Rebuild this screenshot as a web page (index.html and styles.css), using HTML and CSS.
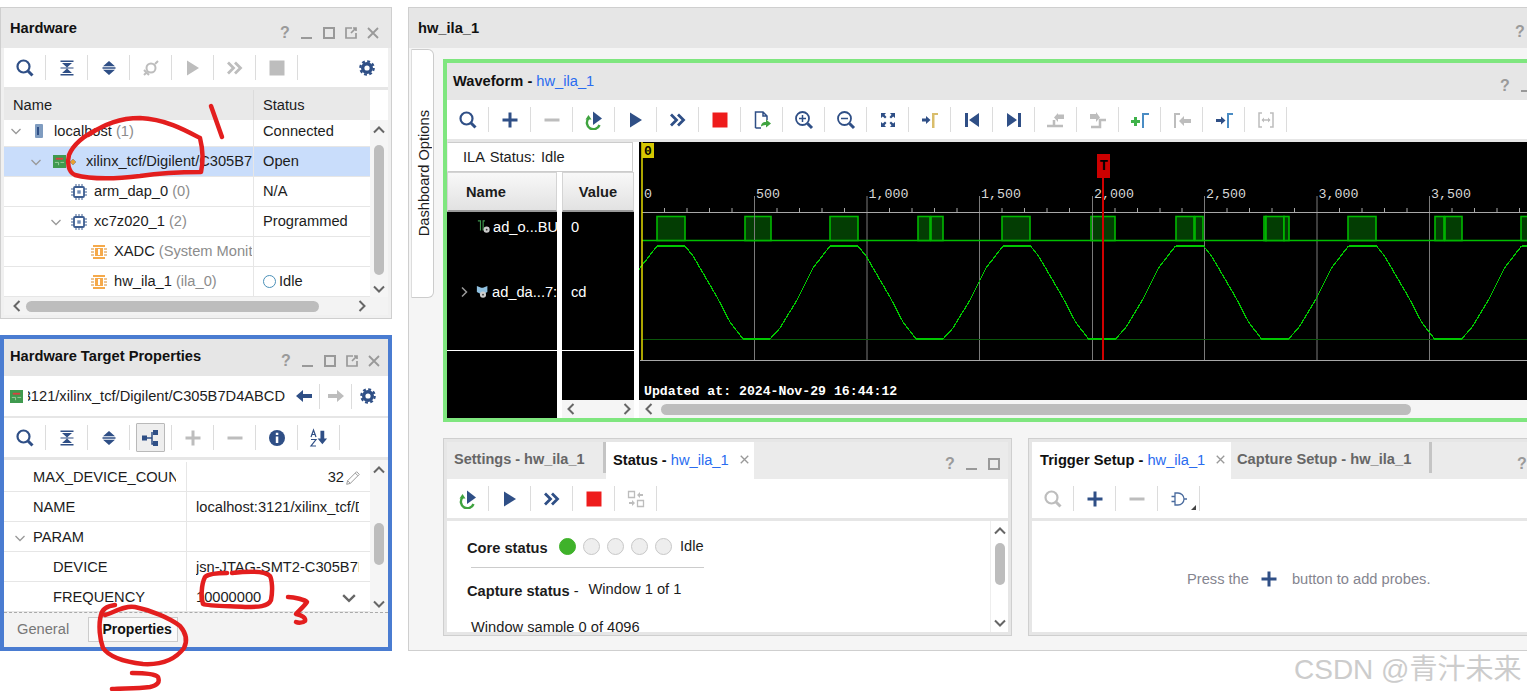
FILE: index.html
```html
<!DOCTYPE html>
<html lang="en">
<head>
<meta charset="utf-8">
<title>hw_ila_1</title>
<link rel="stylesheet" href="styles.css">
</head>
<body>
<svg class="sprite" width="0" height="0" aria-hidden="true">
  <symbol id="search" viewBox="0 0 20 20"><circle cx="8.500" cy="8.500" r="6" fill="none" stroke="currentColor" stroke-width="2.200"/><path d="M13 13l4.500 4.500" stroke="currentColor" stroke-width="3" fill="none"/></symbol>
  <symbol id="collapse" viewBox="0 0 20 20"><path fill="currentColor" d="M3.500 2.500h13V4h-13zM5 5h10l-5 4.500zM3.500 9.500h13v1h-13zM5 15l5-4.500 5 4.500zM3.500 16h13v1.500h-13z"/></symbol>
  <symbol id="expand" viewBox="0 0 20 20"><path fill="currentColor" d="M10 3l6 5.300H4zM3.500 9.300h13v1.400h-13zM4 11.700h12L10 17z"/></symbol>
  <symbol id="plug" viewBox="0 0 20 20"><g fill="none" stroke="currentColor" stroke-width="2"><circle cx="10" cy="10" r="4.500"/><path d="M6 14l-3 3M3 12l5 5M14 6l3-3"/></g></symbol>
  <symbol id="play" viewBox="0 0 20 20"><path fill="currentColor" d="M4 2.500L16 10 4 17.500z"/></symbol>
  <symbol id="fast" viewBox="0 0 20 20"><path fill="none" stroke="currentColor" stroke-width="2.800" d="M3 4.500l5.500 5.500L3 15.500M10 4.500l5.500 5.500L10 15.500"/></symbol>
  <symbol id="stop" viewBox="0 0 20 20"><path fill="currentColor" d="M2.500 2.500h15v15h-15z"/></symbol>
  <symbol id="gear" viewBox="0 0 20 20"><circle cx="10" cy="10" r="4.300" fill="none" stroke="currentColor" stroke-width="3.400"/><circle cx="10" cy="10" r="6.700" fill="none" stroke="currentColor" stroke-width="2.200" stroke-dasharray="2.900 2.360"/></symbol>
  <symbol id="plus" viewBox="0 0 20 20"><path fill="currentColor" d="M8.500 2.500h3v6h6v3h-6v6h-3v-6h-6v-3h6z"/></symbol>
  <symbol id="minus" viewBox="0 0 20 20"><path fill="currentColor" d="M2.500 8.500h15v3h-15z"/></symbol>
  <symbol id="rerun" viewBox="0 0 20 20"><path fill="none" stroke="#3fa33f" stroke-width="2.400" d="M4.500 8.500A6.500 6.500 0 1 0 15.500 15"/><path fill="#3fa33f" d="M1.500 9.500L4.500 5l3 4.500z"/><path fill="#2f4f86" d="M9 1.500L18 8.500 9 15z"/></symbol>
  <symbol id="export" viewBox="0 0 20 20"><path fill="none" stroke="#2f4f86" stroke-width="1.500" d="M3.500 18V2H11l4 4v4M3.500 18H9M11 2v4h4"/><path fill="#3fa33f" d="M9 16.500c0-3 2-4.500 5-4.500V9.500l5 4-5 4V15c-2 0-3.500.5-5 1.500z"/></symbol>
  <symbol id="zoomin" viewBox="0 0 20 20"><circle cx="8.500" cy="8.500" r="6.500" fill="none" stroke="currentColor" stroke-width="1.800"/><path d="M13.500 13.500l4.500 4.500" stroke="currentColor" stroke-width="3"/><path d="M8.500 5v7M5 8.500h7" stroke="currentColor" stroke-width="1.500"/></symbol>
  <symbol id="zoomout" viewBox="0 0 20 20"><circle cx="8.500" cy="8.500" r="6.500" fill="none" stroke="currentColor" stroke-width="1.800"/><path d="M13.500 13.500l4.500 4.500" stroke="currentColor" stroke-width="3"/><path d="M5 8.500h7" stroke="currentColor" stroke-width="1.500"/></symbol>
  <symbol id="fit" viewBox="0 0 20 20"><path fill="currentColor" d="M3 3h5L6.500 4.800 8.500 7 7 8.500 4.800 6.500 3 8zM17 3v5l-1.800-1.500L13 8.500 11.500 7l2-2.200L12 3zM3 17v-5l1.800 1.500L7 11.500 8.500 13l-2 2.200L8 17zM17 17h-5l1.500-1.800-2-2.200 1.500-1.500 2.200 2L17 12z"/></symbol>
  <symbol id="mark-zero" viewBox="0 0 20 20"><path fill="#2f4f86" d="M2 8.500h4V6l4.500 4L6 14v-2.500H2z"/><path fill="#d9bd6b" d="M12 18V3h6v2h-3.500v13z"/></symbol>
  <symbol id="first" viewBox="0 0 20 20"><path fill="currentColor" d="M3 3h3v14H3zM17 3v14L7 10z"/></symbol>
  <symbol id="last" viewBox="0 0 20 20"><path fill="currentColor" d="M14 3h3v14h-3zM3 3l10 7-10 7z"/></symbol>
  <symbol id="edge-l" viewBox="0 0 20 20"><path fill="none" stroke="currentColor" stroke-width="2.500" d="M1 16h7V10M6.500 16H17"/><path fill="currentColor" d="M18 4.500v4.500h-6v3L8 7.500 12 3v1.500z"/></symbol>
  <symbol id="edge-r" viewBox="0 0 20 20"><path fill="none" stroke="currentColor" stroke-width="2.500" d="M3 17h9V10h6"/><path fill="currentColor" d="M2 4v5h6v3l4-4.500L8 2v2z"/></symbol>
  <symbol id="mark-add" viewBox="0 0 20 20"><path fill="#3fb24a" d="M4 7h3v3h3v3H7v3H4v-3H1v-3h3z"/><path fill="#4a8cc4" d="M12 18V3h7v2h-5v13z"/></symbol>
  <symbol id="mark-back" viewBox="0 0 20 20"><path fill="currentColor" d="M2 18V3h6v2H4v13z"/><path fill="currentColor" d="M19 9v4h-7v3l-5-5 5-5v3z"/></symbol>
  <symbol id="mark-go" viewBox="0 0 20 20"><path fill="#2f4f86" d="M2 9h5V6.500l4.500 4-4.500 4V12H2z"/><path fill="#4a8cc4" d="M13 18V3h6v2h-4v13z"/></symbol>
  <symbol id="measure" viewBox="0 0 20 20"><path fill="none" stroke="currentColor" stroke-width="1.500" d="M6 3H3v14h3M14 3h3v14h-3M6 10h8"/><path fill="currentColor" d="M5.500 10L8 7.500v5zM14.500 10L12 7.500v5z"/></symbol>
  <symbol id="swap" viewBox="0 0 20 20"><g fill="none" stroke="currentColor" stroke-width="1.300"><path d="M2.500 2.500h6v6h-6zM11.500 11.500h6v6h-6z"/></g><path fill="currentColor" d="M17 5h-3V3l-3 3 3 3V7h3zM3 15h3v2l3-3-3-3v2H3z"/></symbol>
  <symbol id="gate" viewBox="0 0 20 20"><path fill="none" stroke="#4a6b9e" stroke-width="1.300" d="M6 4h3a6 6 0 0 1 0 12H6zM2.500 7.500H6M2.500 12.500H6M15 10h3"/></symbol>
  <symbol id="arrow-l" viewBox="0 0 20 20"><path fill="currentColor" d="M2 10l7-6v4h9v4H9v4z"/></symbol>
  <symbol id="arrow-r" viewBox="0 0 20 20"><path fill="currentColor" d="M18 10l-7-6v4H2v4h9v4z"/></symbol>
  <symbol id="tree" viewBox="0 0 20 20"><path fill="none" stroke="currentColor" stroke-width="1.500" d="M7 10h5M12 4v12h2"/><path fill="currentColor" d="M2 7.500h5v5H2zM13 2h5v5h-5zM13 13h5v5h-5z"/></symbol>
  <symbol id="info" viewBox="0 0 20 20"><circle cx="10" cy="10" r="8" fill="currentColor"/><path fill="#fff" d="M8.800 8.500h2.500V15H8.800zM8.800 4.800h2.500v2.300H8.800z"/></symbol>
  <symbol id="sort" viewBox="0 0 20 20"><path fill="none" stroke="currentColor" stroke-width="1.200" d="M2 9l2.500-7L7 9M3 6.500h3M2 11.500h5l-5 6.500h5"/><path fill="currentColor" d="M11 3h4v8h3l-5 6-5-6h3z" transform="translate(1 0) scale(.95)"/></symbol>
  <symbol id="pencil" viewBox="0 0 20 20"><path fill="none" stroke="#9a9a9a" stroke-width="1.100" d="M3 17l1-4L14 3l3 3L7 16zM4 13l3 3M12.500 4.500l3 3"/></symbol>
  <symbol id="chip" viewBox="0 0 16 16"><rect x="3" y="3" width="10" height="10" rx="1" fill="none" stroke="#3f5f92" stroke-width="1.800"/><rect x="6.300" y="6.300" width="3.400" height="3.400" fill="#6f8bb5"/><path stroke="#3f5f92" stroke-width="1" d="M5 0v3M8 0v3M11 0v3M5 13v3M8 13v3M11 13v3M0 5h3M0 8h3M0 11h3M13 5h3M13 8h3M13 11h3"/></symbol>
  <symbol id="core" viewBox="0 0 16 16"><path fill="#f5a94a" d="M2 1h12v2H2zM2 13h12v2H2zM4 4h8v8H4z"/><path fill="#fff" d="M7 5h2v6H7z"/><path stroke="#d98a2a" d="M0 5h3M0 8h3M0 11h3M13 5h3M13 8h3M13 11h3"/></symbol>
  <symbol id="server" viewBox="0 0 16 16"><rect x="4" y="1" width="8" height="14" rx="1" fill="#7f9cc0"/><path stroke="#2f4f86" d="M7 4v8" stroke-width="2"/></symbol>
  <symbol id="board" viewBox="0 0 14 14"><rect width="14" height="14" fill="#3f9a4f"/><path fill="#d84040" d="M3 3h8v2H3z"/><path stroke="#9ad09f" fill="none" d="M2 8h4v3M8 8h4"/></symbol>
  <symbol id="chev-d" viewBox="0 0 12 12"><path fill="none" stroke="currentColor" stroke-width="1.300" d="M1.500 4L6 8.500 10.500 4"/></symbol>
  <symbol id="chev-r" viewBox="0 0 12 12"><path fill="none" stroke="currentColor" stroke-width="1.500" d="M4 1.500L8.500 6 4 10.500"/></symbol>
  <symbol id="sb-u" viewBox="0 0 12 12"><path fill="none" stroke="#666" stroke-width="2" d="M1 8.500L6 3.500l5 5"/></symbol>
  <symbol id="sb-d" viewBox="0 0 12 12"><path fill="none" stroke="#666" stroke-width="2" d="M1 3.500l5 5 5-5"/></symbol>
  <symbol id="sb-l" viewBox="0 0 12 12"><path fill="none" stroke="#666" stroke-width="2" d="M8.500 1L3.500 6l5 5"/></symbol>
  <symbol id="sb-r" viewBox="0 0 12 12"><path fill="none" stroke="#666" stroke-width="2" d="M3.500 1l5 5-5 5"/></symbol>
  <symbol id="w-min" viewBox="0 0 12 12"><path fill="#999" d="M0 10h11v2H0z"/></symbol>
  <symbol id="w-max" viewBox="0 0 12 12"><path fill="none" stroke="#999" stroke-width="2" d="M1 1h10v10H1z"/></symbol>
  <symbol id="w-pop" viewBox="0 0 12 12"><path fill="none" stroke="#999" stroke-width="1.700" d="M7 1H1v10h10V6M6 6l5-5M8 1h3v3"/></symbol>
  <symbol id="w-close" viewBox="0 0 12 12"><path fill="none" stroke="#999" stroke-width="1.800" d="M1 1l10 10M11 1L1 11"/></symbol>
  <symbol id="sig-bit" viewBox="0 0 16 16"><path fill="none" stroke="#3f9a4f" stroke-width="1.300" d="M1 1h3v11M7 12V1h2"/><circle cx="11" cy="11" r="3.500" fill="#ccc"/><circle cx="11" cy="11" r="1" fill="#333"/></symbol>
  <symbol id="sig-bus" viewBox="0 0 16 16"><path fill="#8fc0e0" d="M1 1l5 2h2l5-2v7l-6 3-6-3z"/><circle cx="8" cy="11" r="3.500" fill="#ccc"/><circle cx="8" cy="11" r="1" fill="#333"/></symbol>
</svg>

<div class="page">
  <div class="left">
    <section class="hw-panel">
      <header class="panel-head hw-head">
        <span class="title">Hardware</span>
        <div class="ctrls">
          <span class="help">?</span>
          <span class="ctl"><svg class="w"><use href="#w-min"/></svg></span>
          <span class="ctl"><svg class="w"><use href="#w-max"/></svg></span>
          <span class="ctl"><svg class="w"><use href="#w-pop"/></svg></span>
          <span class="ctl"><svg class="w"><use href="#w-close"/></svg></span>
        </div>
      </header>
      <div class="toolbar">
        <span class="btn blue"><svg class="ic"><use href="#search"/></svg></span>
        <span class="btn blue"><svg class="ic"><use href="#collapse"/></svg></span>
        <span class="btn blue"><svg class="ic"><use href="#expand"/></svg></span>
        <span class="btn grey"><svg class="ic"><use href="#plug"/></svg></span>
        <span class="btn grey"><svg class="ic"><use href="#play"/></svg></span>
        <span class="btn grey"><svg class="ic"><use href="#fast"/></svg></span>
        <span class="btn grey"><svg class="ic"><use href="#stop"/></svg></span>
        <span class="tool-end blue"><svg class="ic"><use href="#gear"/></svg></span>
      </div>
      <div class="gap3"></div>
      <div class="tbl-head">
        <div class="th th-name">Name</div>
        <div class="th th-status">Status</div>
      </div>
      <div class="hw-body">
        <div class="hw-rows">
          <div class="row first">
            <div class="c1 lv0"><svg class="chev"><use href="#chev-d"/></svg><svg class="node"><use href="#server"/></svg><span>localhost <i>(1)</i></span></div>
            <div class="c2">Connected</div>
          </div>
          <div class="row sel">
            <div class="c1 lv1"><svg class="chev"><use href="#chev-d"/></svg><svg class="node wide" viewBox="0 0 26 14"><use href="#board" width="13" height="13"/><path fill="#e8a030" stroke="#777" stroke-width=".5" d="M20 4l3 3-3 3-3-3z"/></svg><span>xilinx_tcf/Digilent/C305B7D4ABCD</span></div>
            <div class="c2">Open</div>
          </div>
          <div class="row">
            <div class="c1 lv2"><span class="chev"></span><svg class="node"><use href="#chip"/></svg><span>arm_dap_0 <i>(0)</i></span></div>
            <div class="c2">N/A</div>
          </div>
          <div class="row">
            <div class="c1 lv2"><svg class="chev"><use href="#chev-d"/></svg><svg class="node"><use href="#chip"/></svg><span>xc7z020_1 <i>(2)</i></span></div>
            <div class="c2">Programmed</div>
          </div>
          <div class="row">
            <div class="c1 lv3"><span class="chev"></span><svg class="node"><use href="#core"/></svg><span>XADC <i>(System Monitor)</i></span></div>
            <div class="c2"></div>
          </div>
          <div class="row">
            <div class="c1 lv3"><span class="chev"></span><svg class="node"><use href="#core"/></svg><span>hw_ila_1 <i>(ila_0)</i></span></div>
            <div class="c2"><span class="idle-dot"></span>Idle</div>
          </div>
        </div>
        <div class="vscroll vs-hw">
          <svg class="sb"><use href="#sb-u"/></svg>
          <span class="thumb"></span>
          <svg class="sb sb-end"><use href="#sb-d"/></svg>
        </div>
      </div>
      <div class="hscroll hs-hw">
        <svg class="sb"><use href="#sb-l"/></svg>
        <span class="hthumb"></span>
        <svg class="sb"><use href="#sb-r"/></svg>
      </div>
    </section>

    <section class="prop-panel">
      <header class="panel-head prop-head">
        <span class="title">Hardware Target Properties</span>
        <div class="ctrls">
          <span class="help">?</span>
          <span class="ctl"><svg class="w"><use href="#w-min"/></svg></span>
          <span class="ctl"><svg class="w"><use href="#w-max"/></svg></span>
          <span class="ctl"><svg class="w"><use href="#w-pop"/></svg></span>
          <span class="ctl"><svg class="w"><use href="#w-close"/></svg></span>
        </div>
      </header>
      <div class="target">
        <svg class="t-board"><use href="#board"/></svg>
        <div class="t-path"><span>localhost:3121/xilinx_tcf/Digilent/C305B7D4ABCD</span></div>
        <span class="t-btn blue"><svg class="ic"><use href="#arrow-l"/></svg></span>
        <span class="t-btn grey"><svg class="ic"><use href="#arrow-r"/></svg></span>
        <span class="t-btn last blue"><svg class="ic"><use href="#gear"/></svg></span>
      </div>
      <div class="gap2"></div>
      <div class="toolbar">
        <span class="btn blue"><svg class="ic"><use href="#search"/></svg></span>
        <span class="btn blue"><svg class="ic"><use href="#collapse"/></svg></span>
        <span class="btn blue"><svg class="ic"><use href="#expand"/></svg></span>
        <span class="btn blue"><span class="active"><svg class="ic"><use href="#tree"/></svg></span></span>
        <span class="btn grey"><svg class="ic"><use href="#plus"/></svg></span>
        <span class="btn grey"><svg class="ic"><use href="#minus"/></svg></span>
        <span class="btn blue"><svg class="ic"><use href="#info"/></svg></span>
        <span class="btn blue"><svg class="ic"><use href="#sort"/></svg></span>
      </div>
      <div class="gap3"></div>
      <div class="prop-body">
        <div class="prop-rows">
          <div class="prow"><div class="p1 pl1"><span class="clip">MAX_DEVICE_COUNT</span></div><div class="p2 p2-num">32<svg class="pen"><use href="#pencil"/></svg></div></div>
          <div class="prow"><div class="p1 pl1"><span class="clip">NAME</span></div><div class="p2"><span class="clip">localhost:3121/xilinx_tcf/Digilent/C305B7D4ABCD</span></div></div>
          <div class="prow"><div class="p1 pl0"><svg class="chev"><use href="#chev-d"/></svg>PARAM</div><div class="p2"></div></div>
          <div class="prow"><div class="p1 pl2">DEVICE</div><div class="p2"><span class="clip">jsn-JTAG-SMT2-C305B7D4ABCD</span></div></div>
          <div class="prow"><div class="p1 pl2">FREQUENCY</div><div class="p2 p2-sel">10000000<svg class="sb sb-sel"><use href="#sb-d"/></svg></div></div>
        </div>
        <div class="vscroll vs-prop">
          <svg class="sb"><use href="#sb-u"/></svg>
          <span class="thumb"></span>
          <svg class="sb sb-end"><use href="#sb-d"/></svg>
        </div>
      </div>
      <div class="prop-tabs">
        <span class="ptab">General</span>
        <span class="ptab on">Properties</span>
      </div>
    </section>
  </div>

  <section class="main">
    <header class="panel-head main-head">
      <span class="title">hw_ila_1</span>
      <div class="ctrls">
        <span class="help">?</span>
        <span class="ctl"><svg class="w"><use href="#w-min"/></svg></span>
        <span class="ctl"><svg class="w"><use href="#w-max"/></svg></span>
        <span class="ctl"><svg class="w"><use href="#w-pop"/></svg></span>
        <span class="ctl"><svg class="w"><use href="#w-close"/></svg></span>
      </div>
    </header>
    <div class="main-body">
      <div class="dash-tab"><span>Dashboard Options</span></div>
      <div class="dash">
        <section class="wf">
          <header class="panel-head wf-head">
            <span class="title">Waveform - <a class="lnk">hw_ila_1</a></span>
            <div class="ctrls">
              <span class="help">?</span>
              <span class="ctl"><svg class="w"><use href="#w-min"/></svg></span>
              <span class="ctl"><svg class="w"><use href="#w-max"/></svg></span>
              <span class="ctl"><svg class="w"><use href="#w-pop"/></svg></span>
              <span class="ctl"><svg class="w"><use href="#w-close"/></svg></span>
            </div>
          </header>
          <div class="toolbar">
            <span class="btn blue"><svg class="ic"><use href="#search"/></svg></span>
            <span class="btn blue"><svg class="ic"><use href="#plus"/></svg></span>
            <span class="btn grey"><svg class="ic"><use href="#minus"/></svg></span>
            <span class="btn"><svg class="ic"><use href="#rerun"/></svg></span>
            <span class="btn blue"><svg class="ic"><use href="#play"/></svg></span>
            <span class="btn blue"><svg class="ic"><use href="#fast"/></svg></span>
            <span class="btn red"><svg class="ic"><use href="#stop"/></svg></span>
            <span class="btn"><svg class="ic"><use href="#export"/></svg></span>
            <span class="btn blue"><svg class="ic"><use href="#zoomin"/></svg></span>
            <span class="btn blue"><svg class="ic"><use href="#zoomout"/></svg></span>
            <span class="btn blue"><svg class="ic"><use href="#fit"/></svg></span>
            <span class="btn"><svg class="ic"><use href="#mark-zero"/></svg></span>
            <span class="btn blue"><svg class="ic"><use href="#first"/></svg></span>
            <span class="btn blue"><svg class="ic"><use href="#last"/></svg></span>
            <span class="btn grey"><svg class="ic"><use href="#edge-l"/></svg></span>
            <span class="btn grey"><svg class="ic"><use href="#edge-r"/></svg></span>
            <span class="btn"><svg class="ic"><use href="#mark-add"/></svg></span>
            <span class="btn grey"><svg class="ic"><use href="#mark-back"/></svg></span>
            <span class="btn"><svg class="ic"><use href="#mark-go"/></svg></span>
            <span class="btn grey"><svg class="ic"><use href="#measure"/></svg></span>
          </div>
          <div class="gap3"></div>
          <div class="wf-area">
            <div class="wf-side">
              <div class="ila">ILA Status: Idle</div>
              <div class="wf-cols">
                <div class="wf-col col-name">
                  <div class="wf-h wf-h-name">Name</div>
                  <div class="sig-rows">
                    <div class="sig s1"><svg class="sig-ic"><use href="#sig-bit"/></svg><span>ad_o...BU</span></div>
                    <div class="sig s2"><svg class="sig-chev"><use href="#chev-r"/></svg><svg class="sig-ic"><use href="#sig-bus"/></svg><span>ad_da...7:</span></div>
                  </div>
                  <div class="sig-fill"></div>
                </div>
                <div class="wf-col col-val">
                  <div class="wf-h">Value</div>
                  <div class="sig-rows">
                    <div class="val s1">0</div>
                    <div class="val s2">cd</div>
                  </div>
                  <div class="sig-fill short"></div>
                  <div class="hscroll hs-val">
                    <svg class="sb"><use href="#sb-l"/></svg>
                    <svg class="sb"><use href="#sb-r"/></svg>
                  </div>
                </div>
              </div>
            </div>
            <div class="wf-plot">
              <svg class="plot" viewBox="639 142 888 258" width="888" height="258">
                <defs>
                  <path id="period" fill="none" stroke="#00c800" stroke-width="1.200" d="M657 246H685L693 256 703 273 717 297 730 322 743 339H770L780 328 797 300 813 268 830 246"/>
                </defs>
                <g class="grid">
                  <path d="M754.500 196V360M867 196V360M979.500 196V360M1092.500 196V360M1204.500 196V360M1317 196V360M1429.500 196V360"/>
                </g>
                <path d="M642 212.500H1527" class="ruler"/>
                <path class="ruler" d="M664.500 208v4M687 208v4M709.500 208v4M732 208v4M777 208v4M799.500 208v4M822 208v4M844.500 208v4M889.500 208v4M912 208v4M934.500 208v4M957 208v4M1002 208v4M1024.500 208v4M1047 208v4M1069.500 208v4M1115 208v4M1137.500 208v4M1160 208v4M1182 208v4M1227 208v4M1249.500 208v4M1272 208v4M1294.500 208v4M1339.500 208v4M1362 208v4M1384.500 208v4M1407 208v4M1452 208v4M1474.500 208v4M1497 208v4M1519.500 208v4"/>
                <g class="tick-labels">
                  <text x="644" y="198">0</text>
                  <text x="756" y="198">500</text>
                  <text x="868.500" y="198">1,000</text>
                  <text x="981" y="198">1,500</text>
                  <text x="1094" y="198">2,000</text>
                  <text x="1206" y="198">2,500</text>
                  <text x="1318.500" y="198">3,000</text>
                  <text x="1431" y="198">3,500</text>
                </g>
                <path d="M642 240.500H1527" class="lo"/>
                <g class="pulses">
                  <rect x="657" y="216.500" width="28" height="24"/>
                  <rect x="745" y="216.500" width="26" height="24"/>
                  <rect x="830" y="216.500" width="28" height="24"/>
                  <rect x="918" y="216.500" width="12" height="24"/>
                  <rect x="931" y="216.500" width="12" height="24"/>
                  <rect x="1002" y="216.500" width="28" height="24"/>
                  <rect x="1091" y="216.500" width="24" height="24"/>
                  <rect x="1176" y="216.500" width="18" height="24"/>
                  <rect x="1195" y="216.500" width="8" height="24"/>
                  <rect x="1264" y="216.500" width="2" height="24"/>
                  <rect x="1266" y="216.500" width="18" height="24"/>
                  <rect x="1284" y="216.500" width="5" height="24"/>
                  <rect x="1348" y="216.500" width="28" height="24"/>
                  <rect x="1435" y="216.500" width="9" height="24"/>
                  <rect x="1445" y="216.500" width="17" height="24"/>
                  <rect x="1521" y="216.500" width="28" height="24"/>
                </g>
                <g class="grid over">
                  <path d="M754.500 216V240M1092.500 216V240M1204.500 216V240"/>
                </g>
                <path d="M642 339.500H1527" class="base"/>
                <g shape-rendering="crispEdges">
                  <use href="#period" x="-173"/>
                  <use href="#period"/>
                  <use href="#period" x="173"/>
                  <use href="#period" x="345.500"/>
                  <use href="#period" x="518.500"/>
                  <use href="#period" x="691.500"/>
                  <use href="#period" x="864.500"/>
                </g>
                <path d="M640 360.500H1527" class="ruler"/>
                <path d="M642 142V360" class="cursor"/>
                <rect x="642" y="143" width="12" height="15" fill="#d6c800"/>
                <text x="644" y="155" class="zero">0</text>
                <path d="M1103 178V360" class="trig"/>
                <rect x="1097" y="154" width="13" height="24" fill="#cc0000"/>
                <text x="1099.500" y="170" class="t-label">T</text>
                <text x="644" y="395" class="updated">Updated at: 2024-Nov-29 16:44:12</text>
              </svg>
              <div class="hscroll hs-plot">
                <svg class="sb"><use href="#sb-l"/></svg>
                <span class="hthumb"></span>
              </div>
            </div>
          </div>
        </section>

        <div class="lower">
          <section class="sub status">
            <div class="tabs">
              <span class="tab off">Settings - hw_ila_1</span>
              <span class="tab-sep"></span>
              <span class="tab on">Status - <a class="lnk">hw_ila_1</a><svg class="tab-x"><use href="#w-close"/></svg></span>
              <div class="ctrls">
                <span class="help">?</span>
                <span class="ctl"><svg class="w"><use href="#w-min"/></svg></span>
                <span class="ctl"><svg class="w"><use href="#w-max"/></svg></span>
              </div>
            </div>
            <div class="toolbar">
              <span class="btn"><svg class="ic"><use href="#rerun"/></svg></span>
              <span class="btn blue"><svg class="ic"><use href="#play"/></svg></span>
              <span class="btn blue"><svg class="ic"><use href="#fast"/></svg></span>
              <span class="btn red"><svg class="ic"><use href="#stop"/></svg></span>
              <span class="btn grey"><svg class="ic"><use href="#swap"/></svg></span>
            </div>
            <div class="gap3"></div>
            <div class="sub-body">
              <div class="status-text">
                <div class="core">
                  <b>Core status</b>
                  <span class="led on"></span><span class="led"></span><span class="led"></span><span class="led"></span><span class="led"></span>
                  <span class="led-label">Idle</span>
                </div>
                <hr class="rule">
                <div class="capture"><b>Capture status</b><span class="dash-sign">-</span><span class="cap-val">Window 1 of 1</span></div>
                <div class="sample">Window sample 0 of 4096</div>
              </div>
              <div class="vscroll vs-status">
                <svg class="sb"><use href="#sb-u"/></svg>
                <span class="thumb"></span>
                <svg class="sb sb-end"><use href="#sb-d"/></svg>
              </div>
            </div>
          </section>

          <section class="sub trigger">
            <div class="tabs">
              <span class="tab on tr-on">Trigger Setup - <a class="lnk">hw_ila_1</a><svg class="tab-x"><use href="#w-close"/></svg></span>
              <span class="tab off cap">Capture Setup - hw_ila_1</span>
              <span class="tab-sep"></span>
              <div class="ctrls">
                <span class="help">?</span>
                <span class="ctl"><svg class="w"><use href="#w-min"/></svg></span>
                <span class="ctl"><svg class="w"><use href="#w-max"/></svg></span>
              </div>
            </div>
            <div class="toolbar">
              <span class="btn grey"><svg class="ic"><use href="#search"/></svg></span>
              <span class="btn blue"><svg class="ic"><use href="#plus"/></svg></span>
              <span class="btn grey"><svg class="ic"><use href="#minus"/></svg></span>
              <span class="btn gate-btn"><svg class="ic"><use href="#gate"/></svg><span class="corner"></span></span>
            </div>
            <div class="gap3"></div>
            <div class="sub-body hint">
              <span>Press the</span>
              <svg class="ic blue hint-plus"><use href="#plus"/></svg>
              <span>button to add probes.</span>
            </div>
          </section>
        </div>
      </div>
    </div>
  </section>

  <svg class="ink" viewBox="0 0 1527 691" width="1527" height="691" aria-hidden="true">
    <g fill="none" stroke="#e31e1e" stroke-width="4.500" stroke-linecap="round" stroke-linejoin="round">
      <path d="M88 135C105 124 120 118 140 118C165 119 185 130 200 138C203 150 203 163 201 172C180 172 160 173 140 176C115 179 90 179 75 175C68 172 67 162 69 155C73 145 85 135 100 128"/>
      <path d="M211 106L222 137"/>
      <path d="M115 605C108 606 102 609 101 615C98 625 100 640 103 648C110 658 125 662 143 664C160 665 175 660 184 648C188 640 186 633 180 626C170 618 150 610 135 607C125 605 115 612 105 615"/>
      <path d="M132 673C143 673 155 674 158 677C160 682 158 685 150 687C135 689 122 688 112 689"/>
      <path d="M227 573C218 573 208 574 205 577C201 585 201 598 203 604C208 606 225 606 245 607C258 607 268 607 271 600C273 590 272 580 270 576C265 571 250 571 232 573"/>
      <path d="M288 597C295 597 305 600 307 602C303 608 297 612 296 614C302 615 306 618 305 621C303 623 298 623 296 622"/>
    </g>
  </svg>
  <div class="watermark">CSDN @青汁未来</div>
</div>
</body>
</html>
```

FILE: styles.css
```css
* { box-sizing: border-box; }
html, body { margin: 0; padding: 0; height: 100%; overflow: hidden; background: #fff; }
body { font: 14.67px "Liberation Sans", Arial, sans-serif; color: #1c1c1c; }
.sprite { display: block; width: 0; height: 0; }

.page { position: relative; display: flex; gap: 16px; width: 1527px; height: 691px; overflow: hidden; }
.left { flex: 0 0 392px; padding-top: 7px; display: flex; flex-direction: column; gap: 16px; }

.panel-head { display: flex; justify-content: space-between; background: #e6e6e6; flex: none; }
.title { font-weight: 700; color: #111; white-space: nowrap; }
.ctrls { display: flex; align-items: center; flex: none; }
.help { width: 22px; text-align: center; font: 700 16px "Liberation Sans", sans-serif; color: #9a9a9a; }
.ctl { width: 22px; display: flex; justify-content: center; }
.w { width: 12px; height: 12px; display: block; }

.toolbar { display: flex; height: 39px; background: #fff; padding-top: 7px; flex: none; position: relative; }
.btn { flex: none; width: 42px; height: 25px; border-right: 1px solid #dcdcdc; display: flex; align-items: center; justify-content: center; position: relative; }
.ic { width: 20px; height: 20px; display: block; }
.blue { color: #2f4f86; }
.grey { color: #bdbdbd; }
.red { color: #ee1c1c; }
.tool-end { margin-left: auto; width: 42px; height: 25px; display: flex; align-items: center; justify-content: center; }
.active { width: 29px; height: 29px; background: #eee; border: 1px solid #b9b9b9; display: flex; align-items: center; justify-content: center; border-radius: 1px; margin-left: -1px; }
.gap3 { height: 3px; flex: none; background: #e6e6e6; }
.gap2 { height: 2px; flex: none; background: #e6e6e6; }

.hw-panel { height: 312px; border: 1px solid #cfcfcf; background: #f0f0f0; padding: 0 3px 4px; display: flex; flex-direction: column; }
.hw-head { height: 40px; margin: 0 -3px; padding: 12px 7px 0 9px; background: #e8e8e8; }
.hw-head .ctrls { margin-top: 3px; height: 20px; }

.tbl-head { display: flex; height: 30px; background: #fff; flex: none; }
.th { background: #e9e9e9; padding-top: 7px; height: 30px; }
.th-name { width: 250px; padding-left: 9px; border-right: 1px solid #dcdcdc; }
.th-status { width: 116px; padding-left: 9px; }

.hw-body { display: flex; height: 177px; background: #fff; flex: none; }
.hw-rows { width: 366px; flex: none; }
.row { display: flex; height: 30px; border-bottom: 1px solid #e6e6e6; line-height: 29px; }
.row.first { height: 27px; line-height: 22px; }
.row.first .c1 { padding-bottom: 4px; }
.row.sel { background: #c9ddfb; }
.c1 { width: 250px; display: flex; align-items: center; white-space: nowrap; overflow: hidden; border-right: 1px solid #e6e6e6; flex: none; padding-right: 1px; }
.c1 > span:last-child { overflow: hidden; min-width: 0; }
.c2 { flex: 1; padding-left: 9px; white-space: nowrap; }
.c1 i { font-style: normal; color: #8c8c8c; }
.lv0 { padding-left: 5px; }
.lv1 { padding-left: 25px; }
.lv2 { padding-left: 45px; }
.lv3 { padding-left: 65px; }
.chev { width: 14px; height: 12px; color: #999; flex: none; display: block; }
.node { width: 16px; height: 16px; margin: 0 7px 0 8px; flex: none; display: block; }
.node.wide { width: 26px; height: 14px; margin-left: 10px; }
.idle-dot { display: inline-block; width: 13px; height: 13px; border: 1px solid #4a90b8; border-radius: 50%; margin-right: 3px; vertical-align: -2px; }

.sb { width: 12px; height: 12px; display: block; flex: none; }
.vscroll { width: 18px; flex: none; display: flex; flex-direction: column; align-items: center; background: #f5f5f5; padding-top: 4px; padding-bottom: 2px; }
.thumb { display: block; width: 10px; background: #bdbdbd; border-radius: 5px; flex: none; }
.sb-end { margin-top: auto; }
.vs-hw .thumb { margin-top: 9px; height: 130px; }
.vs-prop .thumb { margin-top: 47px; height: 42px; }
.vs-status .thumb { margin-top: 6px; height: 42px; }
.vs-status { padding-bottom: 3px; background: #fff; border-left: 1px solid #eee; }

.hscroll { display: flex; align-items: center; background: #f3f3f3; flex: none; }
.hthumb { display: block; height: 11px; background: #bdbdbd; border-radius: 6px; flex: none; }
.hs-hw { height: 18px; padding-left: 3px; width: 384px; padding-right: 20px; }
.hs-hw .sb:first-child { margin-left: 4px; }
.hs-hw .sb:last-child { margin-left: auto; }
.hs-hw .hthumb { width: 293px; margin-left: 3px; }

.prop-panel { height: 316px; border: 4px solid #4a7cd1; background: #f3f3f3; display: flex; flex-direction: column; }
.prop-head { height: 37px; padding: 9px 3px 0 6px; }
.prop-head .ctrls { margin-top: 3px; height: 20px; }
.target { display: flex; align-items: center; height: 40px; background: #fff; flex: none; }
.t-board { width: 13px; height: 13px; margin-left: 6px; flex: none; }
.t-path { width: 257px; margin-left: 5px; overflow: hidden; display: flex; justify-content: flex-end; white-space: nowrap; flex: none; }
.t-btn { width: 32px; height: 25px; display: flex; align-items: center; justify-content: center; border-right: 1px solid #dcdcdc; flex: none; }
.t-btn.blue { margin-left: 3px; }
.t-btn.last { border-right: 0; margin-left: 0; width: 32px; }
.prop-body { display: flex; height: 152px; background: #fff; flex: none; padding-top: 2px; }
.prop-rows { width: 366px; flex: none; }
.vs-prop { margin-top: -2px; padding-top: 4px; }
.prow { display: flex; height: 30px; border-bottom: 1px solid #e6e6e6; line-height: 31px; white-space: nowrap; }
.p1 { width: 183px; flex: none; overflow: hidden; border-right: 1px solid #e6e6e6; display: flex; align-items: center; padding-top: 2px; }
.clip { display: block; overflow: hidden; white-space: nowrap; }
.pl0 { padding-left: 9px; }
.pl0 .chev { margin-right: 6px; }
.pl1 { padding-left: 29px; padding-right: 10px; }
.pl2 { padding-left: 49px; }
.p2 { flex: 1; padding: 0 11px 0 9px; overflow: hidden; min-width: 0; }
.p2-num { display: flex; justify-content: flex-end; align-items: center; padding-top: 2px; padding-right: 8px; }
.pen { width: 18px; height: 18px; flex: none; }
.p2-sel { display: flex; justify-content: space-between; align-items: center; padding-top: 2px; padding-right: 14px; }
.sb-sel { width: 14px; height: 14px; }
.prop-tabs { flex: 1; border-top: 1px dashed #aaa; background: #f3f3f3; display: flex; align-items: center; padding: 0 0 2px 13px; gap: 18px; }
.ptab { color: #777; }
.ptab.on { width: 90px; height: 25px; border: 1px solid #ccc; background: #fafafa; color: #111; font-size: 14px; font-weight: 700; display: flex; align-items: center; justify-content: center; padding-left: 8px; margin-left: 1px; }

.main { flex: 0 0 1218px; height: 644px; margin-top: 7px; border: 1px solid #cfcfcf; background: #f5f5f5; display: flex; flex-direction: column; }
.main-head { height: 40px; padding: 12px 6px 0 9px; background: #e6e6e6; }
.main-head .ctrls { margin-top: 2px; height: 20px; }
.main-body { display: flex; flex: 1; background: #f5f5f5; min-height: 0; }
.dash-tab { flex: none; width: 23px; height: 249px; margin: 1px 0 0 2px; padding-left: 2px; background: #fff; border: 1px solid #ccc; border-left-color: #ddd; border-radius: 0 6px 6px 0; display: flex; align-items: center; justify-content: center; }
.dash-tab span { writing-mode: vertical-rl; transform: rotate(180deg); white-space: nowrap; }
.dash { flex: none; width: 1171px; margin-left: 9px; padding-top: 11px; display: flex; flex-direction: column; gap: 16px; }

.wf { height: 363px; border: 4px solid #7fe67f; display: flex; flex-direction: column; background: #fff; flex: none; }
.wf-head { height: 37px; padding: 10px 6px 0 6px; }
.wf-head .ctrls { margin-top: 3px; height: 20px; }
.lnk { color: #2a6cf0; font-weight: 400; }

.wf-area { display: flex; height: 276px; flex: none; background: #fff; }
.wf-side { width: 187px; margin-right: 5px; flex: none; display: flex; flex-direction: column; }
.ila { height: 30px; width: 186px; border: 1px solid #ccc; border-left-color: #eee; padding-left: 15px; line-height: 28px; word-spacing: 1.500px; flex: none; }
.wf-cols { display: flex; gap: 5px; flex: 1; min-height: 0; }
.wf-col { display: flex; flex-direction: column; flex: none; }
.col-name { width: 110px; }
.col-val { width: 72px; }
.wf-h { height: 40px; flex: none; text-align: center; font-weight: 700; line-height: 38px; background: linear-gradient(#f8f8f8, #e2e2e2); border: 1px solid #d4d4d4; border-bottom: 2px solid #9a9a9a; }
.wf-h-name { text-align: left; padding-left: 18px; }
.sig-rows { height: 139px; flex: none; background: #000; color: #fff; border-bottom: 1px solid #fff; padding-top: 1px; overflow: hidden; white-space: nowrap; }
.sig, .val { display: flex; align-items: center; height: 28px; }
.sig.s2, .val.s2 { margin-top: 37px; }
.sig.s1 { padding-left: 30px; }
.sig.s2 { padding-left: 11px; }
.sig span { overflow: hidden; }
.val { padding-left: 9px; }
.sig-ic { width: 14px; height: 14px; margin-right: 2px; flex: none; }
.sig-chev { width: 12px; height: 12px; color: #999; margin-right: 6px; flex: none; }
.sig-fill { flex: 1; background: #000; }
.hs-val { height: 18px; justify-content: space-between; padding: 0 1px 0 3px; background: #f5f5f5; }
.wf-plot { flex: none; width: 888px; display: flex; flex-direction: column; }
.plot { display: block; background: #000; flex: none; }
.hs-plot { height: 18px; padding-left: 4px; background: #f5f5f5; }
.hs-plot .hthumb { width: 750px; margin-left: 6px; }

.grid path { stroke: #7a7a7a; stroke-width: 1; fill: none; }
.ruler { stroke: #a8a8a8; stroke-width: 1; fill: none; }
.tick-labels text { font: 13.300px "Liberation Mono", monospace; fill: #d8d8d8; }
.lo { stroke: #00c000; stroke-width: 1.500; fill: none; }
.pulses rect { fill: #033d03; stroke: #00b800; stroke-width: 1.600; }
.base { stroke: #0a560a; stroke-width: 1; fill: none; }
.cursor { stroke: #e6dc00; stroke-width: 1.500; fill: none; }
.zero { font: 700 13px "Liberation Mono", monospace; fill: #000; }
.trig { stroke: #d00000; stroke-width: 2; fill: none; }
.t-label { font: 700 14px "Liberation Mono", monospace; fill: #000; }
.updated { font: 700 13.200px "Liberation Mono", monospace; fill: #fff; }

.lower { display: flex; gap: 16px; height: 198px; flex: none; }
.sub { border: 1px solid #cfcfcf; padding: 3px; background: #e6e6e6; display: flex; flex-direction: column; flex: none; }
.status { width: 569px; }
.trigger { width: 554px; }
.tabs { height: 37px; background: #ebebeb; display: flex; flex: none; }
.tab { height: 37px; display: flex; align-items: center; white-space: nowrap; font-weight: 700; flex: none; }
.tab.off { color: #666; padding: 0 7px 4px; width: 156px; }
.status .tab.off { font-size: 14.500px; }
.tab.on { background: #fff; color: #111; padding: 0 0 2px 7px; width: 148px; }
.tab-sep { width: 3px; height: 31px; background: #c4c4c4; flex: none; }
.tab-x { width: 9px; height: 9px; margin-left: 11px; flex: none; }
.tab .lnk { margin-left: 4px; }
.status .ctrls { margin-left: auto; margin-top: 6px; margin-right: 3px; }
.trigger .ctrls { margin-left: 79px; margin-top: 6px; }
.tr-on { width: 199px !important; padding-left: 8px !important; }
.cap { width: 198px !important; padding-left: 6px !important; }

.gate-btn .corner { position: absolute; right: 3px; bottom: 1px; border-left: 5px solid transparent; border-bottom: 5px solid #444; }

.sub-body { height: 111px; background: #fff; display: flex; flex: none; }
.status-text { flex: 1; min-width: 0; overflow: hidden; padding: 0 0 0 20px; }
.vs-status { width: 18px; }
.core { display: flex; align-items: center; height: 20px; margin-top: 15px; }
.core b { width: 92px; flex: none; padding-top: 4px; }
.led { width: 17px; height: 17px; margin-right: 7px; border-radius: 50%; background: #eee; border: 1px solid #c8c8c8; flex: none; }
.led.on { background: #3fb22a; border-color: #3fb22a; }
.led-label { margin-left: 1px; padding-bottom: 1px; }
.rule { margin: 11px 0 0 4px; width: 233px; height: 1px; background: #ccc; border: 0; }
.capture { display: flex; margin-top: 12px; height: 20px; align-items: center; white-space: nowrap; }
.capture b { padding-top: 2px; }
.dash-sign { margin-left: 4px; padding-top: 2px; }
.cap-val { margin-left: 10px; padding-bottom: 3px; }
.sample { margin: 19px 0 0 4px; white-space: nowrap; }

.hint { align-items: center; justify-content: flex-start; padding: 4px 0 0 155px; color: #85858f; }
.hint-plus { margin: 0 13px 0 10px; }

.ink { position: absolute; left: 0; top: 0; pointer-events: none; }
.watermark { position: absolute; left: 1294px; top: 647px; font: 28px "Liberation Sans", "Noto Sans CJK SC", sans-serif; color: #c4c4c4; white-space: nowrap; opacity: .85; }
```
